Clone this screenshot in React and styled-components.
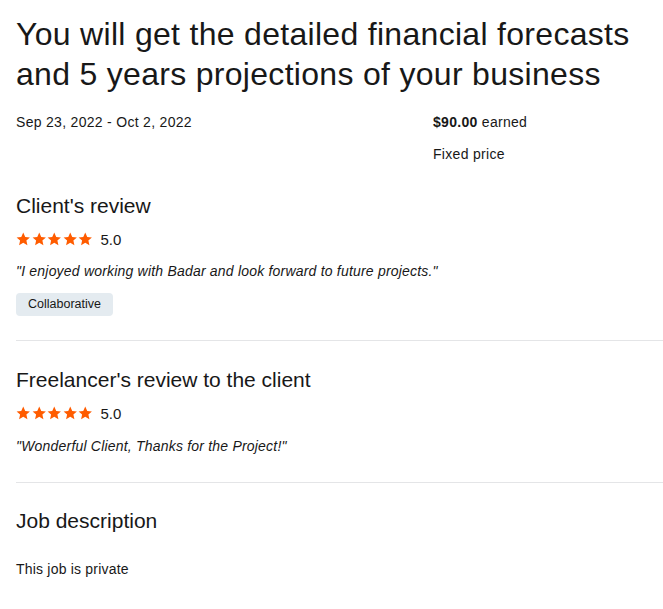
import React from 'react';
import styled, { createGlobalStyle } from 'styled-components';

const Global = createGlobalStyle`
  body {
    margin: 0;
    background: #fff;
    font-family: 'Liberation Sans', Arial, sans-serif;
    color: #181818;
  }
`;

const Page = styled.div`
  padding: 14px 0 0 16px;
`;

const Title = styled.h1`
  margin: 0;
  max-width: 630px;
  font-size: 32px;
  line-height: 40px;
  font-weight: 400;
  color: #181818;
  letter-spacing: 0.3px;
`;

const Meta = styled.div`
  display: grid;
  grid-template-columns: 417px 1fr;
  margin-top: 19px;
  font-size: 14px;
  letter-spacing: 0.3px;
`;

const MetaCol = styled.div`
  display: flex;
  flex-direction: column;
  gap: 14px;
  line-height: 18px;
`;

const Section = styled.section`
  padding: ${p => p.pad || '0'};
  border-bottom: ${p => (p.divided ? '1px solid #e4e5e7' : 'none')};
`;

const H2 = styled.h2`
  margin: 0;
  font-size: 21px;
  line-height: 26px;
  font-weight: 400;
`;

const Rating = styled.div`
  display: flex;
  align-items: center;
  gap: 8px;
  margin-top: 12px;
  font-size: 15px;
`;

const Stars = styled.div`
  display: flex;
  gap: 1px;
`;

const Quote = styled.p`
  margin: ${p => p.gap || '10px'} 0 0;
  font-size: 14px;
  font-style: italic;
  line-height: 20px;
  letter-spacing: 0.2px;
`;

const Tag = styled.span`
  display: inline-block;
  margin-top: 12px;
  padding: 0 12px;
  height: 23px;
  line-height: 23px;
  font-size: 12.5px;
  background: #e4ebf0;
  border-radius: 4px;
`;

const Body = styled.p`
  margin: 25px 0 0;
  font-size: 14px;
  line-height: 20px;
  letter-spacing: 0.2px;
`;

const Star = () => (
  <svg width="14.5" height="14.5" viewBox="0 0 24 24">
    <path
      fill="#ff5c00"
      d="M12 1l3.3 7.1 7.7.8-5.8 5.2 1.7 7.7L12 17.9l-6.9 3.9 1.7-7.7L1 8.9l7.7-.8z"
    />
  </svg>
);

const StarRating = ({ value }) => (
  <Rating>
    <Stars>
      {[0, 1, 2, 3, 4].map(i => (
        <Star key={i} />
      ))}
    </Stars>
    {value}
  </Rating>
);

function App() {
  return (
    <Page>
      <Global />
      <Title>
        You will get the detailed financial forecasts and 5 years projections of
        your business
      </Title>
      <Meta>
        <MetaCol>
          <span>Sep 23, 2022 - Oct 2, 2022</span>
        </MetaCol>
        <MetaCol>
          <span>
            <strong>$90.00</strong> earned
          </span>
          <span>Fixed price</span>
        </MetaCol>
      </Meta>

      <Section divided pad="30px 0 24px">
        <H2>Client's review</H2>
        <StarRating value="5.0" />
        <Quote gap="13px">
          "I enjoyed working with Badar and look forward to future projects."
        </Quote>
        <Tag>Collaborative</Tag>
      </Section>

      <Section divided pad="26px 0 26px">
        <H2>Freelancer's review to the client</H2>
        <StarRating value="5.0" />
        <Quote gap="14px">"Wonderful Client, Thanks for the Project!"</Quote>
      </Section>

      <Section pad="25px 0 0">
        <H2>Job description</H2>
        <Body>This job is private</Body>
      </Section>
    </Page>
  );
}

export default App;
